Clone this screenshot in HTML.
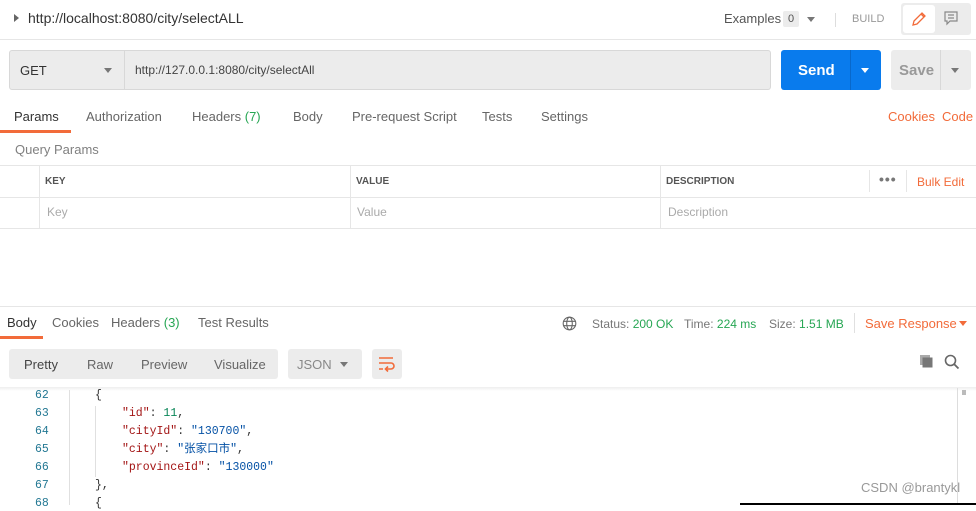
<!DOCTYPE html>
<html><head><meta charset="utf-8"><style>
*{box-sizing:border-box;margin:0;padding:0}
body{width:976px;height:505px;overflow:hidden;background:#fff;font-family:"Liberation Sans","Noto Sans CJK SC",sans-serif;font-size:12px;color:#505050;position:relative}
.a{position:absolute;white-space:nowrap}
.or{color:#f26b3a}.gr{color:#26a653}
.code .a{font-family:"Liberation Mono","Noto Sans CJK SC",monospace;font-size:11.5px;line-height:14px;height:14px}
.k{color:#a31515}.s{color:#0451a5}.n{color:#098658}
</style></head><body>
<div class="a" style="left:14px;top:14px;width:0;height:0;border-left:5px solid #666;border-top:4px solid transparent;border-bottom:4px solid transparent"></div>
<div class="a" style="left:28px;top:10px;font-size:14px;color:#333">http://localhost:8080/city/selectALL</div>
<div class="a" style="left:724px;top:11px;font-size:13px;color:#555">Examples</div>
<div class="a" style="left:783px;top:11px;width:16px;height:16px;background:#ececec;border-radius:2px;font-size:11px;text-align:center;line-height:16px">0</div>
<div class="a" style="left:807px;top:17px;border-top:5px solid #777;border-left:4px solid transparent;border-right:4px solid transparent"></div>
<div class="a" style="left:835px;top:13px;width:1px;height:14px;background:#ddd"></div>
<div class="a" style="left:852px;top:13px;font-size:11px;color:#999">BUILD</div>
<div class="a" style="left:901px;top:3px;width:70px;height:32px;background:#ececec;border-radius:3px"></div>
<div class="a" style="left:903px;top:5px;width:32px;height:28px;background:#fff;border-radius:3px"></div>
<svg class="a" style="left:910px;top:10px" width="18" height="18" viewBox="0 0 18 18"><path d="M3 15 L4 11 L12 3 L15 6 L7 14 Z M11 4 L14 7" fill="none" stroke="#f26b3a" stroke-width="1.3"/></svg>
<svg class="a" style="left:943px;top:10px" width="16" height="16" viewBox="0 0 16 16"><path d="M2 2 H14 V11 H7 L4 14 V11 H2 Z M5 5 H11 M5 8 H11" fill="none" stroke="#888" stroke-width="1.2"/></svg>
<div class="a" style="left:0;top:39px;width:976px;height:1px;background:#e6e6e6"></div>
<div class="a" style="left:9px;top:50px;width:762px;height:40px;background:#ececec;border:1px solid #d8d8d8;border-radius:3px"></div>
<div class="a" style="left:124px;top:51px;width:1px;height:38px;background:#d8d8d8"></div>
<div class="a" style="left:20px;top:63px;font-size:13px;color:#333">GET</div>
<div class="a" style="left:104px;top:68px;border-top:5px solid #777;border-left:4px solid transparent;border-right:4px solid transparent"></div>
<div class="a" style="left:135px;top:63px;font-size:12px;color:#444">http://127.0.0.1:8080/city/selectAll</div>
<div class="a" style="left:781px;top:50px;width:100px;height:40px;background:#097bed;border-radius:3px"></div>
<div class="a" style="left:850px;top:50px;width:1px;height:40px;background:#0868cb"></div>
<div class="a" style="left:798px;top:62px;font-size:15px;font-weight:bold;color:#fff">Send</div>
<div class="a" style="left:861px;top:68px;border-top:5px solid #fff;border-left:4px solid transparent;border-right:4px solid transparent"></div>
<div class="a" style="left:891px;top:50px;width:80px;height:40px;background:#ececec;border-radius:3px"></div>
<div class="a" style="left:940px;top:50px;width:1px;height:40px;background:#d8d8d8"></div>
<div class="a" style="left:899px;top:62px;font-size:15px;font-weight:bold;color:#999">Save</div>
<div class="a" style="left:951px;top:68px;border-top:5px solid #777;border-left:4px solid transparent;border-right:4px solid transparent"></div>
<div class="a" style="left:14px;top:109px;font-size:13px;color:#333">Params</div>
<div class="a" style="left:86px;top:109px;font-size:13px;color:#666">Authorization</div>
<div class="a" style="left:192px;top:109px;font-size:13px;color:#666">Headers <span class="gr">(7)</span></div>
<div class="a" style="left:293px;top:109px;font-size:13px;color:#666">Body</div>
<div class="a" style="left:352px;top:109px;font-size:13px;color:#666">Pre-request Script</div>
<div class="a" style="left:482px;top:109px;font-size:13px;color:#666">Tests</div>
<div class="a" style="left:541px;top:109px;font-size:13px;color:#666">Settings</div>
<div class="a or" style="left:888px;top:109px;font-size:13px">Cookies</div>
<div class="a or" style="left:942px;top:109px;font-size:13px">Code</div>
<div class="a" style="left:0;top:130px;width:71px;height:3px;background:#f26b3a"></div>
<div class="a" style="left:15px;top:142px;font-size:13px;color:#808080">Query Params</div>
<div class="a" style="left:0;top:165px;width:976px;height:1px;background:#e6e6e6"></div>
<div class="a" style="left:0;top:197px;width:976px;height:1px;background:#e6e6e6"></div>
<div class="a" style="left:0;top:228px;width:976px;height:1px;background:#e6e6e6"></div>
<div class="a" style="left:39px;top:165px;width:1px;height:63px;background:#e6e6e6"></div>
<div class="a" style="left:350px;top:165px;width:1px;height:63px;background:#e6e6e6"></div>
<div class="a" style="left:660px;top:165px;width:1px;height:63px;background:#e6e6e6"></div>
<div class="a" style="left:869px;top:170px;width:1px;height:22px;background:#e6e6e6"></div>
<div class="a" style="left:906px;top:170px;width:1px;height:22px;background:#e6e6e6"></div>
<div class="a" style="left:45px;top:176px;font-size:10px;font-weight:bold;color:#555">KEY</div>
<div class="a" style="left:356px;top:176px;font-size:10px;font-weight:bold;color:#555">VALUE</div>
<div class="a" style="left:666px;top:176px;font-size:10px;font-weight:bold;color:#555">DESCRIPTION</div>
<div class="a" style="left:879px;top:171px;font-size:14px;font-weight:bold;color:#777;letter-spacing:1px">•••</div>
<div class="a or" style="left:917px;top:175px;font-size:12px">Bulk Edit</div>
<div class="a" style="left:47px;top:205px;color:#aaa">Key</div>
<div class="a" style="left:357px;top:205px;color:#aaa">Value</div>
<div class="a" style="left:668px;top:205px;color:#aaa">Description</div>
<div class="a" style="left:0;top:306px;width:976px;height:1px;background:#e6e6e6"></div>
<div class="a" style="left:7px;top:315px;font-size:13px;color:#333">Body</div>
<div class="a" style="left:52px;top:315px;font-size:13px;color:#666">Cookies</div>
<div class="a" style="left:111px;top:315px;font-size:13px;color:#666">Headers <span class="gr">(3)</span></div>
<div class="a" style="left:198px;top:315px;font-size:13px;color:#666">Test Results</div>
<div class="a" style="left:0;top:336px;width:43px;height:3px;background:#f26b3a"></div>
<svg class="a" style="left:562px;top:316px" width="15" height="15" viewBox="0 0 15 15"><g fill="none" stroke="#666" stroke-width="1.1"><circle cx="7.5" cy="7.5" r="6.3"/><ellipse cx="7.5" cy="7.5" rx="2.8" ry="6.3"/><path d="M1.2 5.3H13.8M1.2 9.7H13.8"/></g></svg>
<div class="a" style="left:592px;top:317px;font-size:12px;color:#777">Status: <span class="gr">200 OK</span></div>
<div class="a" style="left:684px;top:317px;font-size:12px;color:#777">Time: <span class="gr">224 ms</span></div>
<div class="a" style="left:769px;top:317px;font-size:12px;color:#777">Size: <span class="gr">1.51 MB</span></div>
<div class="a" style="left:854px;top:313px;width:1px;height:20px;background:#e0e0e0"></div>
<div class="a or" style="left:865px;top:316px;font-size:13px">Save Response</div>
<div class="a" style="left:959px;top:321px;border-top:5px solid #f26b3a;border-left:4px solid transparent;border-right:4px solid transparent"></div>
<div class="a" style="left:9px;top:349px;width:269px;height:30px;background:#ececec;border-radius:3px"></div>
<div class="a" style="left:24px;top:357px;font-size:13px;color:#444">Pretty</div>
<div class="a" style="left:87px;top:357px;font-size:13px;color:#666">Raw</div>
<div class="a" style="left:141px;top:357px;font-size:13px;color:#666">Preview</div>
<div class="a" style="left:214px;top:357px;font-size:13px;color:#666">Visualize</div>
<div class="a" style="left:288px;top:349px;width:74px;height:30px;background:#ececec;border-radius:3px"></div>
<div class="a" style="left:297px;top:357px;font-size:13px;color:#888">JSON</div>
<div class="a" style="left:340px;top:362px;border-top:5px solid #777;border-left:4px solid transparent;border-right:4px solid transparent"></div>
<div class="a" style="left:372px;top:349px;width:30px;height:30px;background:#ececec;border-radius:3px"></div>
<svg class="a" style="left:378px;top:355px" width="18" height="18" viewBox="0 0 18 18"><path d="M1 3H15M1 8H13A3 3 0 0 1 13 14H8M10 11.5L7.5 14L10 16.5M1 14H5" fill="none" stroke="#f26b3a" stroke-width="1.6"/></svg>
<svg class="a" style="left:919px;top:354px" width="15" height="15" viewBox="0 0 15 15"><rect x="1" y="1" width="10" height="10" fill="#aaa"/><rect x="3.5" y="3.5" width="10" height="10" fill="#777"/></svg>
<svg class="a" style="left:944px;top:354px" width="16" height="16" viewBox="0 0 16 16"><circle cx="6.5" cy="6.5" r="5" fill="none" stroke="#666" stroke-width="1.6"/><path d="M10 10L14.5 14.5" stroke="#666" stroke-width="1.8"/></svg>
<div class="a" style="left:0;top:387px;width:976px;height:4px;background:linear-gradient(#eee,#fff)"></div>
<div class="a" style="left:957px;top:388px;width:1px;height:117px;background:#ddd"></div>
<div class="a" style="left:962px;top:390px;width:4px;height:5px;background:#bbb"></div>
<div class="a" style="left:69px;top:390px;width:1px;height:115px;background:#e0e0e0"></div>
<div class="a" style="left:95px;top:406px;width:1px;height:71px;background:#e0e0e0"></div>
<div class="code">
<div class="a" style="left:35px;top:389px;color:#237893">62</div><div class="a" style="left:95px;top:389px;color:#333">{</div>
<div class="a" style="left:35px;top:407px;color:#237893">63</div><div class="a" style="left:122px;top:407px"><span class="k">"id"</span><span style="color:#333">: </span><span class="n">11</span><span style="color:#333">,</span></div>
<div class="a" style="left:35px;top:425px;color:#237893">64</div><div class="a" style="left:122px;top:425px"><span class="k">"cityId"</span><span style="color:#333">: </span><span class="s">"130700"</span><span style="color:#333">,</span></div>
<div class="a" style="left:35px;top:443px;color:#237893">65</div><div class="a" style="left:122px;top:443px"><span class="k">"city"</span><span style="color:#333">: </span><span class="s">"张家口市"</span><span style="color:#333">,</span></div>
<div class="a" style="left:35px;top:461px;color:#237893">66</div><div class="a" style="left:122px;top:461px"><span class="k">"provinceId"</span><span style="color:#333">: </span><span class="s">"130000"</span></div>
<div class="a" style="left:35px;top:479px;color:#237893">67</div><div class="a" style="left:95px;top:479px;color:#333">},</div>
<div class="a" style="left:35px;top:497px;color:#237893">68</div><div class="a" style="left:95px;top:497px;color:#333">{</div>
</div>
<div class="a" style="left:861px;top:480px;font-size:13px;color:#999">CSDN @brantykl</div>
<div class="a" style="left:740px;top:503px;width:236px;height:2px;background:#000"></div>
</body></html>
